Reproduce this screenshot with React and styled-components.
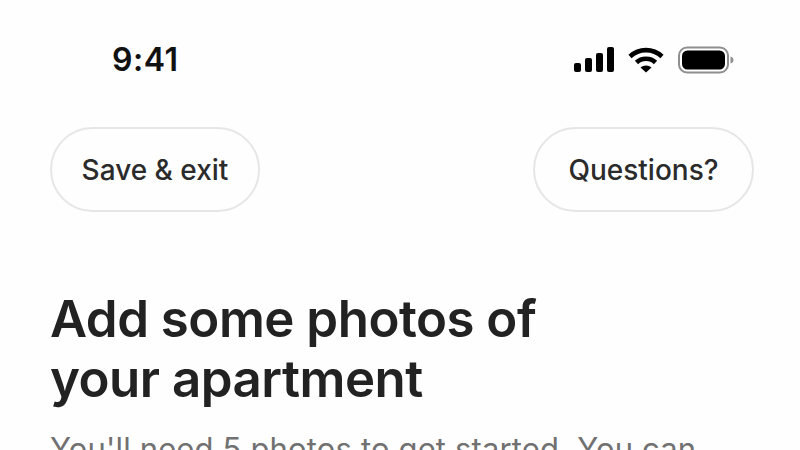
import React from "react";
import styled, { createGlobalStyle } from "styled-components";

const GlobalStyle = createGlobalStyle`
  html, body {
    margin: 0;
    padding: 0;
    background: #fefefe;
  }
  body {
    font-family: Inter, "Liberation Sans", sans-serif;
    overflow: hidden;
  }
`;

const Page = styled.div`
  width: 800px;
  height: 450px;
  overflow: hidden;
  display: flex;
  flex-direction: column;
`;

const StatusBar = styled.div`
  display: flex;
  align-items: center;
  justify-content: space-between;
  height: 40px;
  margin-top: 40px;
  padding: 0 66px 0 112px;
`;

const Time = styled.div`
  font-size: 32px;
  font-weight: 600;
  letter-spacing: 0.5px;
  color: #111;
`;

const StatusIcons = styled.div`
  display: flex;
  align-items: center;
  gap: 14px;
`;

const TopRow = styled.div`
  display: flex;
  justify-content: space-between;
  margin-top: 48px;
  padding: 0 46px 0 50px;
`;

const PillButton = styled.button`
  width: ${({ $width }) => $width}px;
  height: 85px;
  border: 2px solid #e6e6e6;
  border-radius: 43px;
  background: #fefefe;
  font-family: inherit;
  font-size: 28px;
  font-weight: 500;
  color: #2b2b2b;
  padding: 0;
`;

const Content = styled.div`
  padding: 0 50px;
  margin-top: 77px;
`;

const Heading = styled.h1`
  margin: 0;
  font-size: 51px;
  line-height: 60px;
  font-weight: 600;
  letter-spacing: -0.5px;
  color: #222;
`;

const Description = styled.p`
  margin: 20px 0 0;
  font-size: 31px;
  line-height: 40px;
  font-weight: 400;
  letter-spacing: 0.15px;
  color: #717171;
  white-space: nowrap;
`;

const SignalIcon = () => (
  <svg width="40" height="26" viewBox="0 0 40 26" fill="#000">
    <rect x="0" y="16" width="7" height="9" rx="2" />
    <rect x="11" y="11" width="7" height="14" rx="2" />
    <rect x="22" y="6" width="7" height="19" rx="2" />
    <rect x="33" y="0" width="7" height="25" rx="2" />
  </svg>
);

const WifiIcon = () => (
  <svg width="36" height="26" viewBox="0 0 36 26" fill="none" stroke="#000" strokeWidth="4.6">
    <path d="M2 9.5C11 1 25 1 34 9.5" />
    <path d="M8.5 15.5C13.5 10.5 22.5 10.5 27.5 15.5" />
    <path d="M18 25.5L12.5 20.5C15.5 17.8 20.5 17.8 23.5 20.5Z" fill="#000" stroke="none" />
  </svg>
);

const BatteryIcon = () => (
  <svg width="56" height="28" viewBox="0 0 56 28">
    <rect x="1" y="1.5" width="49" height="25" rx="8" fill="none" stroke="#8f8f8f" strokeWidth="2" />
    <rect x="4" y="4.5" width="43" height="19" rx="5.5" fill="#000" />
    <path d="M52.5 10.5C54.5 11 55.5 12.5 55.5 14C55.5 15.5 54.5 17 52.5 17.5Z" fill="#8f8f8f" />
  </svg>
);

export default function App() {
  return (
    <Page>
      <GlobalStyle />
      <StatusBar>
        <Time>9:41</Time>
        <StatusIcons>
          <SignalIcon />
          <WifiIcon />
          <BatteryIcon />
        </StatusIcons>
      </StatusBar>
      <TopRow>
        <PillButton $width={210}>Save &amp; exit</PillButton>
        <PillButton $width={221}>Questions?</PillButton>
      </TopRow>
      <Content>
        <Heading>
          Add some photos of
          <br />
          your apartment
        </Heading>
        <Description>You'll need 5 photos to get started. You can</Description>
      </Content>
    </Page>
  );
}
